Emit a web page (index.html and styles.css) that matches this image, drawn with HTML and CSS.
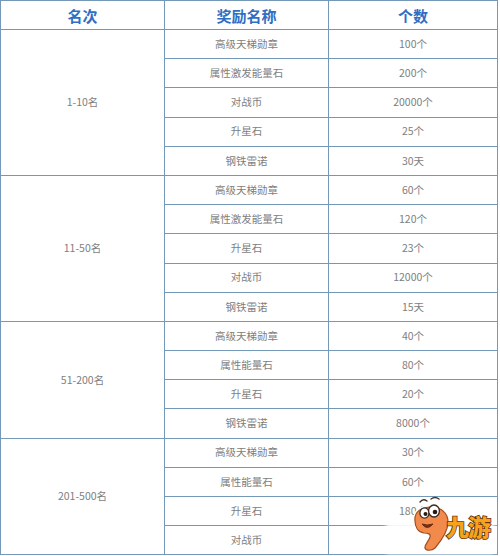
FILE: index.html
```html
<!DOCTYPE html>
<html lang="zh-CN">
<head>
<meta charset="utf-8">
<title>排名奖励</title>
<link rel="stylesheet" href="styles.css">
</head>
<body>
<div class="page">
  <div class="table">
    <div class="cell head">名次</div>
    <div class="cell head">奖励名称</div>
    <div class="cell head">个数</div>

    <div class="cell rank span5">1-10名</div>
    <div class="cell">高级天梯勋章</div><div class="cell">100个</div>
    <div class="cell">属性激发能量石</div><div class="cell">200个</div>
    <div class="cell">对战币</div><div class="cell">20000个</div>
    <div class="cell">升星石</div><div class="cell">25个</div>
    <div class="cell">钢铁雷诺</div><div class="cell">30天</div>

    <div class="cell rank span5">11-50名</div>
    <div class="cell">高级天梯勋章</div><div class="cell">60个</div>
    <div class="cell">属性激发能量石</div><div class="cell">120个</div>
    <div class="cell">升星石</div><div class="cell">23个</div>
    <div class="cell">对战币</div><div class="cell">12000个</div>
    <div class="cell">钢铁雷诺</div><div class="cell">15天</div>

    <div class="cell rank span4">51-200名</div>
    <div class="cell">高级天梯勋章</div><div class="cell">40个</div>
    <div class="cell">属性能量石</div><div class="cell">80个</div>
    <div class="cell">升星石</div><div class="cell">20个</div>
    <div class="cell">钢铁雷诺</div><div class="cell">8000个</div>

    <div class="cell rank span4">201-500名</div>
    <div class="cell">高级天梯勋章</div><div class="cell">30个</div>
    <div class="cell">属性能量石</div><div class="cell">60个</div>
    <div class="cell">升星石</div><div class="cell">180个</div>
    <div class="cell">对战币</div><div class="cell"></div>
  </div>

  <div class="haze"></div>
  <div class="logo">
    <svg class="logo-mark" viewBox="0 0 38 58" width="38" height="58" aria-hidden="true">
      <path d="M4 26 C3 17 10 12 20 12 C30 12 37 18 37 27 C37 37 30 46 24 53 C21 56 15 56 14 53 C13 50 18 46 19 42 C20 39 17 38 13 38 C7 37 4 32 4 26 Z" fill="#fff" stroke="#fff" stroke-width="4"/>
      <path d="M4 26 C3 17 10 12 20 12 C30 12 37 18 37 27 C37 37 30 46 24 53 C21 56 15 56 14 53 C13 50 18 46 19 42 C20 39 17 38 13 38 C7 37 4 32 4 26 Z" fill="#f28a4c" stroke="#a24e24" stroke-width="1.2"/>
      <path d="M9 7 Q12 3 16 6" fill="none" stroke="#4a3020" stroke-width="1.4" stroke-linecap="round"/>
      <path d="M20 4 Q24 1 28 4" fill="none" stroke="#4a3020" stroke-width="1.4" stroke-linecap="round"/>
      <ellipse cx="13.5" cy="18" rx="4.6" ry="5.2" fill="#fff" stroke="#3a2a20" stroke-width="1.3"/>
      <ellipse cx="23" cy="16" rx="5.4" ry="6" fill="#fff" stroke="#3a2a20" stroke-width="1.3"/>
      <circle cx="14.5" cy="19" r="2" fill="#2a1a10"/>
      <circle cx="24" cy="17" r="2.3" fill="#2a1a10"/>
      <path d="M11 29 Q16 36 22 29 Q16 31 11 29 Z" fill="#8a2a10" stroke="#6a2a10" stroke-width="1"/>
    </svg>
    <span class="logo-text">九游</span>
  </div>
</div>
</body>
</html>
```

FILE: styles.css
```css
html, body {
  margin: 0;
  padding: 0;
  background: #ffffff;
}

.page {
  position: relative;
  width: 500px;
  height: 556px;
  overflow: hidden;
  font-family: "Noto Sans CJK SC", "Noto Sans", sans-serif;
}

.table {
  display: grid;
  grid-template-columns: 163px 163px 168px;
  grid-template-rows: 28px repeat(18, 28.2px);
  gap: 1px;
  width: max-content;
  background: #7499b8;
  border: 1px solid #7499b8;
}

.cell {
  background: #ffffff;
  display: flex;
  align-items: center;
  justify-content: center;
  font-size: 10.5px;
  color: #7e7e7e;
  line-height: 1;
}

.head {
  font-size: 15px;
  font-weight: 700;
  color: #2e6fc4;
}

.span5 { grid-row: span 5; }
.span4 { grid-row: span 4; }

.haze {
  position: absolute;
  left: 386px;
  top: 519px;
  width: 108px;
  height: 35px;
  background: rgba(255, 255, 255, 0.92);
  filter: blur(2px);
}

.logo {
  position: absolute;
  left: 411px;
  top: 495px;
  display: flex;
  align-items: flex-end;
}

.logo-mark {
  display: block;
}

.logo-text {
  font-family: "Noto Sans CJK SC", sans-serif;
  font-weight: 900;
  font-size: 23px;
  line-height: 1;
  color: #f6a21c;
  -webkit-text-stroke: 1.6px #5a3414;
  paint-order: stroke fill;
  margin-left: -3px;
  margin-bottom: 15px;
  letter-spacing: -1px;
}
```
